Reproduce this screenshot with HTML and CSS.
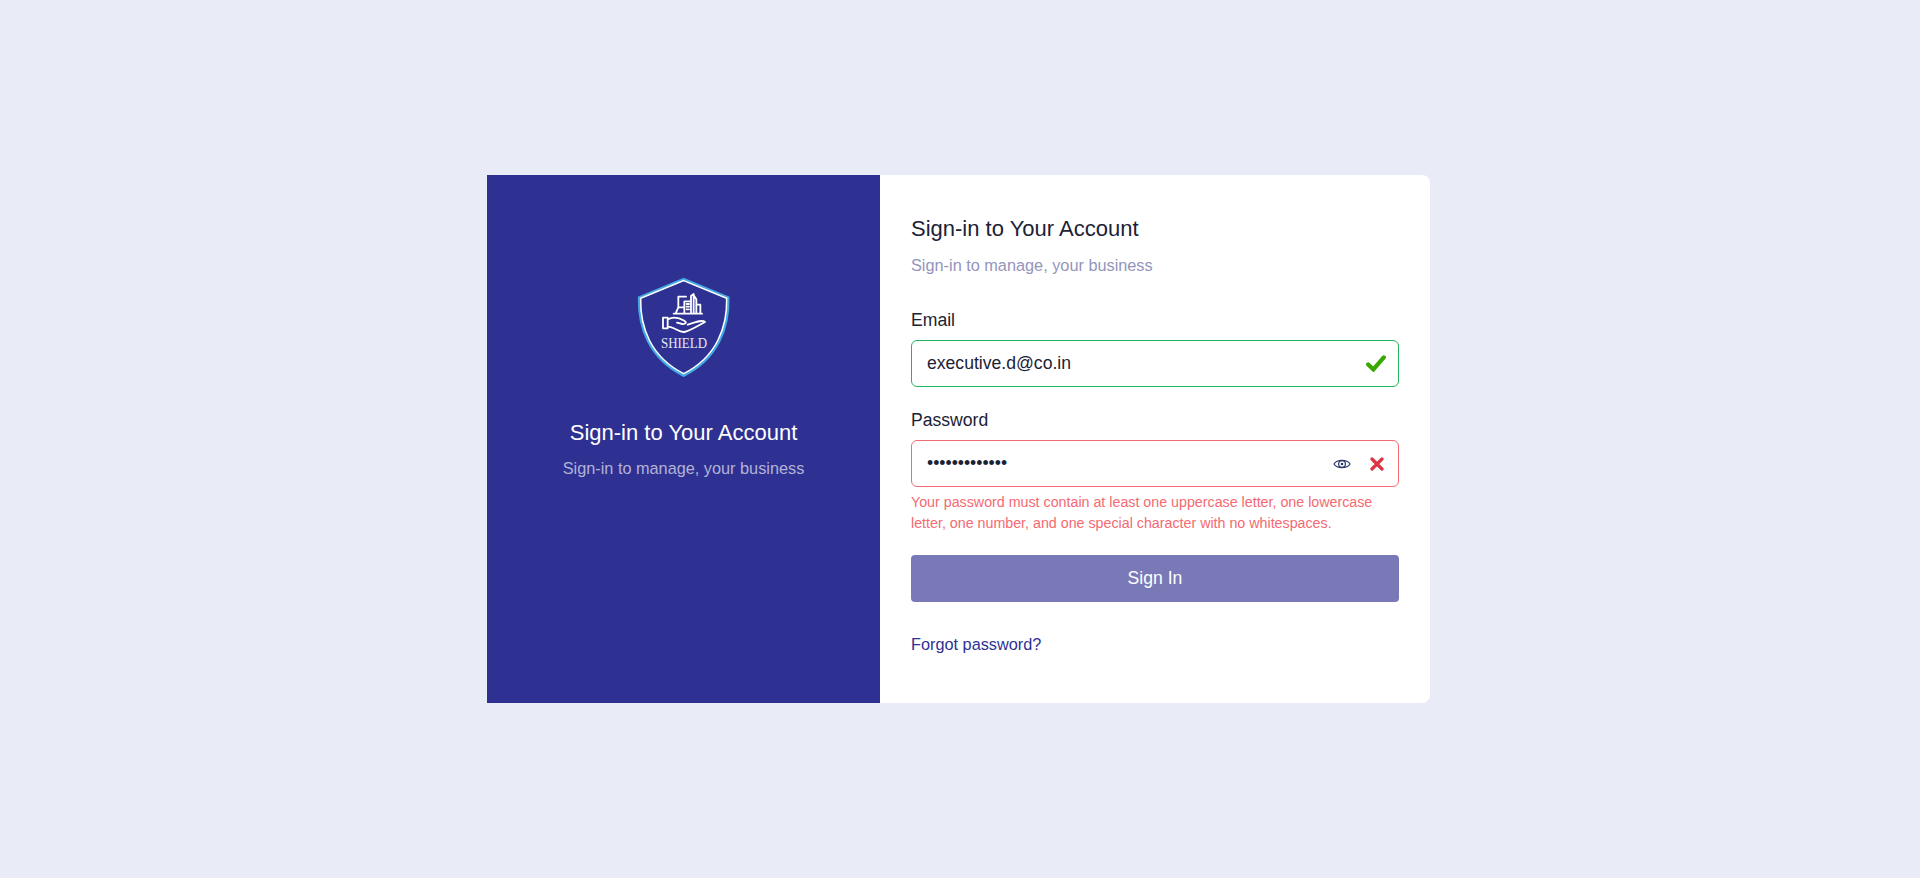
FILE: index.html
```html
<!DOCTYPE html>
<html lang="en">
<head>
<meta charset="utf-8">
<title>Sign-in</title>
<link rel="stylesheet" href="styles.css">
</head>
<body>
<main class="card">
  <section class="brand">
    <svg class="logo" viewBox="-4 0 450 390" width="150" height="130" aria-label="Shield logo">
      <defs><filter id="soft" x="-10%" y="-10%" width="120%" height="120%"><feGaussianBlur stdDeviation="2"/></filter></defs>
      <path class="shield-glow" filter="url(#soft)" d="M220 58 L353 113 C355 200 324 294 220 346 C116 294 85 200 87 113 Z"/>
      <path class="shield-line" d="M220 62 L349 115 C351 200 320 290 220 341 C120 290 89 200 91 115 Z"/>
      <g class="art">
        <path d="M190 161 H275 M196 160 L204 142 V110 H227 M204 142 H222 M222 160 V124 H242 V160 M242 122 V108 L250 102 V160 M250 106 L258 118 V160 M258 134 H270 V160 M229 132 H236 M229 140 H236 M229 148 H236"/>
        <path d="M158 173 H172 V205 H158 Z M172 178 C190 168 205 172 222 182 C230 187 226 193 216 192 L200 188 M172 200 C192 200 205 218 222 216 C240 212 262 198 284 186 C276 178 256 186 232 194"/>
      </g>
      <text class="logo-text" x="221" y="263" text-anchor="middle" textLength="138" lengthAdjust="spacingAndGlyphs">SHIELD</text>
    </svg>
    <h2 class="brand-title">Sign-in to Your Account</h2>
    <p class="brand-sub">Sign-in to manage, your business</p>
  </section>
  <section class="panel">
    <h1 class="panel-title">Sign-in to Your Account</h1>
    <p class="panel-sub">Sign-in to manage, your business</p>
    <form class="form">
      <div class="field">
        <label class="label" for="email">Email</label>
        <div class="control control-ok">
          <input class="input" id="email" type="text" value="executive.d@co.in">
          <svg class="icon-check" viewBox="0 0 20 17" width="20" height="17"><path d="M2.2 9.4 L7.4 14.4 L17.8 2.4"/></svg>
        </div>
      </div>
      <div class="field field-pass">
        <label class="label" for="password">Password</label>
        <div class="control control-bad">
          <input class="input" id="password" type="password" value="abcdefghijklm">
          <svg class="icon-eye" viewBox="0 0 18 12" width="18" height="12"><path d="M1 6 C4 1.2 14 1.2 17 6 C14 10.8 4 10.8 1 6 Z"/><circle cx="9" cy="6" r="3.4"/><circle class="pupil" cx="9" cy="6" r="1.3"/></svg>
          <svg class="icon-x" viewBox="0 0 14 14" width="14" height="14"><path d="M2 2 L12 12 M12 2 L2 12"/></svg>
        </div>
        <p class="error">Your password must contain at least one uppercase letter, one lowercase letter, one number, and one special character with no whitespaces.</p>
      </div>
      <button class="submit" type="button">Sign In</button>
      <a class="forgot" href="#">Forgot password?</a>
    </form>
  </section>
</main>
</body>
</html>
```
FILE: styles.css
```css
* { box-sizing: border-box; }
html, body { height: 100%; }
body {
  margin: 0;
  background: #e9ecf7;
  font-family: "Liberation Sans", Arial, sans-serif;
  display: flex;
  align-items: center;
  justify-content: flex-start;
  padding-left: 487px;
}
.card {
  width: 943px;
  height: 528px;
  display: flex;
  background: #fff;
  border-radius: 0 8px 8px 0;
}
.brand {
  width: 393px;
  flex: none;
  background: #2e3192;
  color: #fff;
  display: flex;
  flex-direction: column;
  align-items: center;
  padding-top: 85px;
}
.logo { display: block; }
.shield-glow { fill: none; stroke: #45a9e4; stroke-width: 9; }
.shield-line { fill: none; stroke: #fff; stroke-width: 4.5; }
.art path { fill: none; stroke: #fff; stroke-width: 5.5; stroke-linejoin: round; stroke-linecap: round; }
.logo-text { font-family: "Liberation Serif", serif; font-size: 42px; fill: #e6e6f4; }
.brand-title { margin: 31px 0 0; font-size: 22px; line-height: 24px; font-weight: 400; color: #fff; }
.brand-sub { margin: 13px 0 0; font-size: 16.3px; line-height: 20px; color: #b3b3d6; }
.panel { flex: 1; padding: 41px 31px 0 31px; }
.panel-title { margin: 0; font-size: 22px; line-height: 26px; font-weight: 400; color: #1c2236; }
.panel-sub { margin: 13px 0 0; font-size: 16.3px; line-height: 20px; color: #9494bc; }
.form { display: flex; flex-direction: column; margin-top: 35px; }
.field-pass { margin-top: 23px; }
.label { display: block; font-size: 17.6px; line-height: 20px; color: #1c2236; margin-bottom: 10px; }
.control {
  height: 47px;
  border: 1px solid;
  border-radius: 6px;
  display: flex;
  align-items: center;
  padding: 0 12px 0 15px;
}
.control-ok { border-color: #1fb65f; }
.control-bad { border-color: #f46a72; }
.input {
  flex: 1;
  min-width: 0;
  border: 0;
  outline: 0;
  padding: 0;
  font: 17.6px "Liberation Sans", Arial, sans-serif;
  color: #1c2236;
  background: transparent;
}
.icon-check path { fill: none; stroke: #38a800; stroke-width: 4.2; stroke-linecap: round; }
.icon-eye { margin-right: 19px; }
.icon-eye path, .icon-eye circle { fill: none; stroke: #2e3a6e; stroke-width: 1.2; }
.icon-eye .pupil { fill: #2e3a6e; stroke: none; }
.icon-x { margin-right: 2px; }
.icon-x path { fill: none; stroke: #dc3545; stroke-width: 3.2; stroke-linecap: round; }
.error { margin: 5px 0 0; font-size: 14.25px; line-height: 21px; color: #f46a72; }
.submit {
  margin-top: 21px;
  height: 47px;
  border: 0;
  border-radius: 4px;
  background: #7979b8;
  color: #fff;
  font: 17.6px "Liberation Sans", Arial, sans-serif;
}
.forgot { margin-top: 32px; font-size: 16.3px; line-height: 20px; color: #2e3192; text-decoration: none; }
```
